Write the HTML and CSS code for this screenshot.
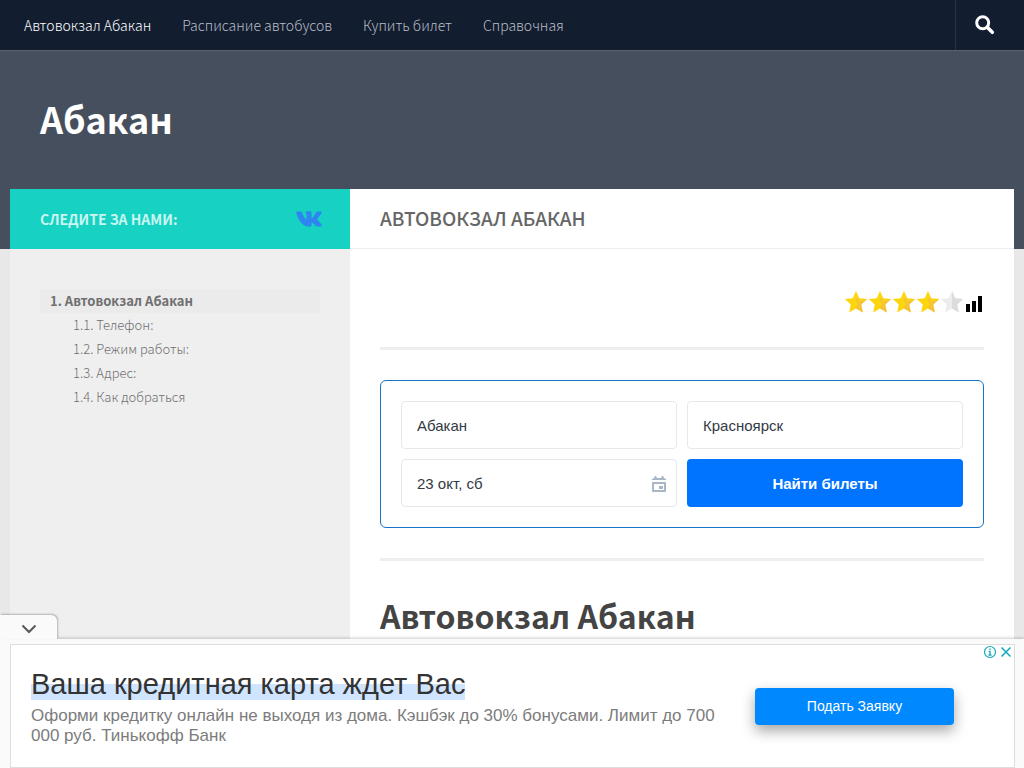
FILE: index.html
```html
<!DOCTYPE html>
<html lang="ru">
<head>
<meta charset="utf-8">
<meta name="viewport" content="width=device-width, initial-scale=1">
<title>Автовокзал Абакан</title>
<link rel="stylesheet" href="styles.css">
</head>
<body>
<header class="header">
  <div class="topbar">
    <nav class="nav">
      <a class="nav-link is-active" href="#">Автовокзал Абакан</a>
      <a class="nav-link" href="#">Расписание автобусов</a>
      <a class="nav-link" href="#">Купить билет</a>
      <a class="nav-link" href="#">Справочная</a>
    </nav>
    <button class="search-toggle" type="button" aria-label="Поиск">
      <svg width="20" height="20" viewBox="0 0 20 20" fill="none" stroke="#fff"><circle cx="7.700" cy="7.700" r="6" stroke-width="3"/><path d="M12.500 12.500l4.800 4.800" stroke-width="3.600" stroke-linecap="round"/></svg>
    </button>
  </div>
  <div class="brand"><a class="brand-link" href="#">Абакан</a></div>
</header>

<div class="page">
  <aside class="sidebar">
    <div class="follow">
      <p class="follow-title">Следите за нами:</p>
      <a class="follow-link" href="#" aria-label="ВКонтакте">
        <svg width="26" height="16" viewBox="0 0 26 16" fill="#2e84f0"><path d="M1 .5h3.700c.7 0 1 .3 1.300 1 1 2.800 2.500 5.500 3.700 6.500.5.400.8.200.8-.5V4c0-1.500-.4-2-1.300-2.300C9.300 1 10.300.3 12.200.3h1.700c1.200 0 1.600.5 1.600 1.600v4.400c0 .9.500 1 1 .5 1.300-1.300 2.600-3.300 3.500-5.300.3-.7.700-1 1.400-1h3.200c1 0 1.300.5.900 1.300-.8 1.900-2.600 4.200-4 5.700-.5.600-.5.900 0 1.500 1.300 1.300 2.900 2.900 3.900 4.500.7 1.100.2 2.100-1.100 2.100h-2.900c-.8 0-1.300-.3-1.900-.9-.8-.9-1.700-2-2.600-2.700-.8-.6-1.400-.4-1.400.7v1.300c0 1-.4 1.500-1.600 1.600C7.200 15.900 2.900 10.600.4 2.200.1 1.200.2.500 1 .5z"/></svg>
      </a>
    </div>
    <nav class="toc">
      <a class="toc-link is-current" href="#station">1. Автовокзал Абакан</a>
      <a class="toc-link toc-sub" href="#">1.1. Телефон:</a>
      <a class="toc-link toc-sub" href="#">1.2. Режим работы:</a>
      <a class="toc-link toc-sub" href="#">1.3. Адрес:</a>
      <a class="toc-link toc-sub" href="#">1.4. Как добраться</a>
    </nav>
  </aside>

  <main class="main">
    <div class="page-title"><h1 class="page-heading">Автовокзал Абакан</h1></div>
    <div class="content">
      <div class="rating" role="img" aria-label="Рейтинг: 4 из 5">
        <svg class="star" viewBox="0 0 24 24"><path fill="#fbd60f" d="M12 .8l3.200 7.500 8 .8-6 5.400 1.700 8L12 18.500l-6.900 4 1.700-8-6-5.400 8-.8z"/><path fill="#f5c33b" d="M12 9l3.200-.7L13 14zM23.200 9.100l-6 5.400 1.700 8L12 18.500l3-7z"/></svg>
        <svg class="star" viewBox="0 0 24 24"><path fill="#fbd60f" d="M12 .8l3.200 7.500 8 .8-6 5.400 1.700 8L12 18.500l-6.900 4 1.700-8-6-5.400 8-.8z"/><path fill="#f5c33b" d="M12 9l3.200-.7L13 14zM23.200 9.100l-6 5.400 1.700 8L12 18.500l3-7z"/></svg>
        <svg class="star" viewBox="0 0 24 24"><path fill="#fbd60f" d="M12 .8l3.200 7.500 8 .8-6 5.400 1.700 8L12 18.500l-6.900 4 1.700-8-6-5.400 8-.8z"/><path fill="#f5c33b" d="M12 9l3.200-.7L13 14zM23.200 9.100l-6 5.400 1.700 8L12 18.500l3-7z"/></svg>
        <svg class="star" viewBox="0 0 24 24"><path fill="#fbd60f" d="M12 .8l3.200 7.500 8 .8-6 5.400 1.700 8L12 18.500l-6.900 4 1.700-8-6-5.400 8-.8z"/><path fill="#f5c33b" d="M12 9l3.200-.7L13 14zM23.200 9.100l-6 5.400 1.700 8L12 18.500l3-7z"/></svg>
        <svg class="star" viewBox="0 0 24 24"><path fill="#ececec" d="M12 .8l3.200 7.500 8 .8-6 5.400 1.700 8L12 18.500l-6.900 4 1.700-8-6-5.400 8-.8z"/><path fill="#dcdcdc" d="M12 .8l3.200 7.500 8 .8-6 5.400 1.700 8L12 18.500z"/></svg>
        <svg class="bars" width="20" height="24" viewBox="0 0 20 24"><path d="M2 14h4v8H2zM8 11h4v11H8zM14 6h4v16h-4z"/></svg>
      </div>
      <hr class="rule">
      <form class="search-form">
        <input class="field" type="text" value="Абакан" aria-label="Откуда">
        <input class="field" type="text" value="Красноярск" aria-label="Куда">
        <div class="date">
          <input class="field" type="text" value="23 окт, сб" aria-label="Дата">
          <svg class="date-icon" width="16" height="18" viewBox="0 0 16 18" fill="#a9b6c6"><path d="M1 5V4l2-1 1-2h1l1 2h4l1-2h1l1 2 2 1v1z"/><path fill-rule="evenodd" d="M2 7h12a1 1 0 0 1 1 1v8a1 1 0 0 1-1 1H2a1 1 0 0 1-1-1V8a1 1 0 0 1 1-1zM3 9v6h10V9z"/><path d="M8 11h4v3H8z"/></svg>
        </div>
        <button class="submit" type="button">Найти билеты</button>
      </form>
      <hr class="rule">
      <h2 class="article-heading" id="station">Автовокзал Абакан</h2>
    </div>
  </main>
</div>

<section class="ad" aria-label="Реклама">
  <button class="ad-collapse" type="button" aria-label="Свернуть">
    <svg width="16" height="10" viewBox="0 0 16 10" fill="none" stroke="#55595c" stroke-width="2"><path d="M1.500 1.500L8 8l6.500-6.500"/></svg>
  </button>
  <div class="ad-card">
    <div class="ad-copy">
      <a class="ad-title" href="#">Ваша кредитная карта ждет Вас</a>
      <p class="ad-text">Оформи кредитку онлайн не выходя из дома. Кэшбэк до 30% бонусами. Лимит до 700 000 руб. Тинькофф Банк</p>
    </div>
    <a class="ad-button" href="#">Подать Заявку</a>
    <div class="ad-tools">
      <button class="ad-tool" type="button" aria-label="Информация"><svg width="14" height="14" viewBox="0 0 14 14" fill="none" stroke="#11a9b8"><circle cx="7" cy="7" r="5.500" stroke-width="1.200"/><path d="M7 3.400v1.500M5.600 6.400H7V10M5.400 10.200h3.200" stroke-width="1.300"/></svg></button>
      <button class="ad-tool" type="button" aria-label="Закрыть"><svg width="14" height="14" viewBox="0 0 14 14" fill="none" stroke="#11a9b8" stroke-width="1.500"><path d="M2.500 2.500l9 9M11.500 2.500l-9 9"/></svg></button>
    </div>
  </div>
</section>
</body>
</html>
```
FILE: styles.css
```css
* { box-sizing: border-box; }

body {
  margin: 0;
  min-height: 100vh;
  display: flex;
  flex-direction: column;
  background: #e8e8e8;
  color: #666;
  font-family: "Noto Sans CJK SC", "Open Sans", sans-serif;
  font-size: 14px;
}

a { color: inherit; text-decoration: none; }
button { border: 0; padding: 0; background: none; font: inherit; cursor: pointer; }
svg { display: block; }

.header { background: #464f5d; padding-bottom: 60px; }
.topbar {
  display: flex;
  justify-content: space-between;
  height: 51px;
  background: #121d30;
  border-bottom: 1px solid #59616d;
}
.nav { display: flex; align-items: center; gap: 31px; padding-left: 24px; }
.nav-link { color: #b8bcc3; font-weight: 300; white-space: nowrap; }
.nav-link.is-active { color: #fff; }
.search-toggle {
  display: flex;
  align-items: center;
  width: 69px;
  padding-left: 19px;
  border-left: 1px solid #2a3445;
}
.brand { display: flex; align-items: center; height: 138px; padding: 0 40px 4px; }
.brand-link { color: #fff; font-size: 36px; font-weight: 600; line-height: 60px; }

.page {
  display: flex;
  flex: 1;
  margin: -60px 10px 0;
  background: #fff;
}
.sidebar { flex: 0 0 340px; background: #efefef; }
.follow {
  display: flex;
  align-items: center;
  justify-content: space-between;
  height: 60px;
  padding: 0 28px 0 30px;
  background: #17d1c2;
}
.follow-title {
  margin: 0;
  color: #c9f6f1;
  font-weight: 600;
  text-transform: uppercase;
}
.toc { display: flex; flex-direction: column; padding: 40px 30px; }
.toc-link { padding-left: 10px; color: #707070; font-size: 13px; font-weight: 300; line-height: 24px; }
.toc-link.is-current { background: #ebebeb; font-weight: 600; }
.toc-link.toc-sub { padding-left: 33px; }

.main { flex: 1; min-width: 0; }
.page-title {
  display: flex;
  align-items: center;
  height: 60px;
  padding: 0 30px 2px;
  border-bottom: 1px solid #eee;
}
.page-heading { margin: 0; font-size: 19px; font-weight: 500; text-transform: uppercase; }
.content { padding: 41px 30px 110px; }
.rating { display: flex; justify-content: flex-end; height: 27px; }
.star { width: 24px; height: 24px; }
.rule { margin: 30px 0; border: 0; height: 3px; background: #eee; }

.search-form {
  display: grid;
  grid-template-columns: 1fr 1fr;
  gap: 10px;
  padding: 20px;
  border: 1px solid #1a73c4;
  border-radius: 6px;
  font-family: "Liberation Sans", Arial, sans-serif;
}
.field {
  width: 100%;
  height: 48px;
  padding: 0 15px;
  border: 1px solid #e6e8ee;
  border-radius: 4px;
  background: #fff;
  color: #333a45;
  font: inherit;
  font-size: 15px;
}
.date { position: relative; }
.date-icon { position: absolute; right: 10px; top: 16px; }
.submit { height: 48px; border-radius: 4px; background: #0073ff; color: #fff; font-size: 15px; font-weight: 700; }
.article-heading { margin: 0; color: #444; font-size: 32px; font-weight: 600; line-height: 48px; }

.ad {
  position: fixed;
  left: 0;
  right: 0;
  bottom: 0;
  padding: 5px 9px 0 10px;
  background: #fafafa;
  box-shadow: 0 -1px 3px rgba(0, 0, 0, .2);
  font-family: "Liberation Sans", Arial, sans-serif;
}
.ad-collapse {
  position: absolute;
  left: 0;
  bottom: 100%;
  display: grid;
  place-items: center;
  width: 57px;
  height: 24px;
  padding-top: 3px;
  background: #fafafa;
  border-radius: 0 6px 0 0;
  box-shadow: 1px -1px 2px rgba(0, 0, 0, .25);
}
.ad-card {
  position: relative;
  display: flex;
  align-items: center;
  justify-content: space-between;
  gap: 30px;
  height: 124px;
  padding: 0 60px 0 20px;
  border: 1px solid #ddd;
  background: #fff;
}
.ad-copy { max-width: 690px; padding-top: 2px; }
.ad-title {
  color: #333;
  font-size: 29px;
  line-height: 32px;
  background: linear-gradient(transparent 50%, #cfe5ff 50%);
}
.ad-text { margin: 6px 0 0; color: #7c7c7c; font-size: 17px; line-height: 20px; }
.ad-button {
  flex: 0 0 199px;
  border-radius: 4px;
  background: #0088ff;
  color: #fff;
  font-size: 14px;
  line-height: 37px;
  text-align: center;
  box-shadow: 0 6px 14px rgba(0, 0, 0, .35);
}
.ad-tools { position: absolute; top: 0; right: 1px; display: flex; gap: 2px; }
```
